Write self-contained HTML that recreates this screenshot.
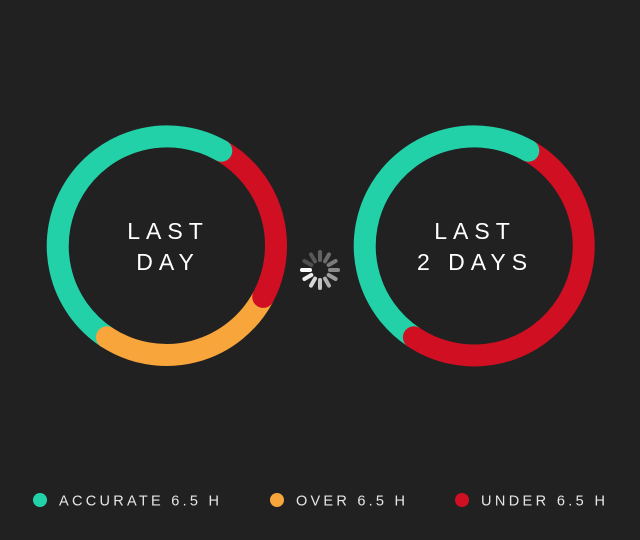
<!DOCTYPE html>
<html><head><style>
html,body{margin:0;padding:0;background:#212121;}
svg{display:block}
text{font-family:"Liberation Sans",sans-serif;}
</style></head><body>
<svg width="640" height="540" viewBox="0 0 640 540" xmlns="http://www.w3.org/2000/svg">
<rect width="640" height="540" fill="#212121"/>
<g fill="none" stroke-width="22" stroke-linecap="butt">
  <path d="M106.9 337.3 A109.5 109.5 0 0 1 221.3 150.7" stroke="#22d1a8"/>
  <path d="M221.3 150.7 A109.5 109.5 0 0 1 263.2 296.9" stroke="#d00f23"/>
  <path d="M263.2 296.9 A109.5 109.5 0 0 1 106.9 337.3" stroke="#f8a53c"/>
</g>
<circle cx="221.3" cy="150.7" r="11" fill="#22d1a8"/>
<circle cx="263.2" cy="296.9" r="11" fill="#d00f23"/>
<circle cx="106.9" cy="337.3" r="11" fill="#f8a53c"/>

<g fill="none" stroke-width="22">
  <path d="M413.9 337.3 A109.5 109.5 0 0 1 528.3 150.7" stroke="#22d1a8"/>
  <path d="M528.3 150.7 A109.5 109.5 0 1 1 413.9 337.3" stroke="#d00f23"/>
</g>
<circle cx="528.3" cy="150.7" r="11" fill="#22d1a8"/>
<circle cx="413.9" cy="337.3" r="11" fill="#d00f23"/>

<g fill="#ffffff" font-size="23" text-anchor="middle" letter-spacing="6">
  <text x="168" y="239">LAST</text>
  <text x="168" y="270">DAY</text>
  <text x="475" y="239">LAST</text>
  <text x="475" y="270">2 DAYS</text>
</g>

<g transform="translate(320,270)" stroke-width="4" stroke-linecap="round">
  <line x1="-18" y1="0" x2="-10" y2="0" stroke="#ffffff" transform="rotate(0)"/>
  <line x1="-18" y1="0" x2="-10" y2="0" stroke="#eeeeee" transform="rotate(-30)"/>
  <line x1="-18" y1="0" x2="-10" y2="0" stroke="#d8d8d8" transform="rotate(-60)"/>
  <line x1="-18" y1="0" x2="-10" y2="0" stroke="#c4c4c4" transform="rotate(-90)"/>
  <line x1="-18" y1="0" x2="-10" y2="0" stroke="#b0b0b0" transform="rotate(-120)"/>
  <line x1="-18" y1="0" x2="-10" y2="0" stroke="#9c9c9c" transform="rotate(-150)"/>
  <line x1="-18" y1="0" x2="-10" y2="0" stroke="#8a8a8a" transform="rotate(-180)"/>
  <line x1="-18" y1="0" x2="-10" y2="0" stroke="#7a7a7a" transform="rotate(-210)"/>
  <line x1="-18" y1="0" x2="-10" y2="0" stroke="#6c6c6c" transform="rotate(-240)"/>
  <line x1="-18" y1="0" x2="-10" y2="0" stroke="#606060" transform="rotate(-270)"/>
  <line x1="-18" y1="0" x2="-10" y2="0" stroke="#575757" transform="rotate(-300)"/>
  <line x1="-18" y1="0" x2="-10" y2="0" stroke="#505050" transform="rotate(-330)"/>
</g>

<circle cx="40" cy="500" r="7" fill="#22d1a8"/>
<circle cx="277" cy="500" r="7" fill="#f8a53c"/>
<circle cx="462" cy="500" r="7" fill="#d00f23"/>
<g fill="#e6e6e6" font-size="14.5">
  <text x="59" y="505.5" textLength="160" lengthAdjust="spacing">ACCURATE 6.5 H</text>
  <text x="296" y="505.5" textLength="109" lengthAdjust="spacing">OVER 6.5 H</text>
  <text x="481" y="505.5" textLength="124" lengthAdjust="spacing">UNDER 6.5 H</text>
</g>
</svg>
</body></html>
